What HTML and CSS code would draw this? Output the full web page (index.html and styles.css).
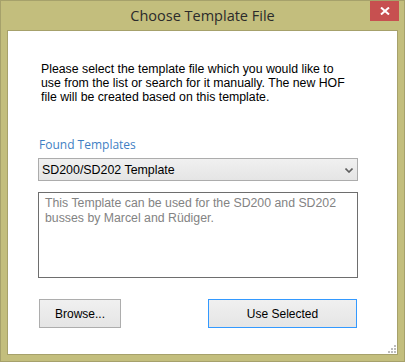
FILE: index.html
```html
<!DOCTYPE html>
<html lang="en">
<head>
    <meta charset="UTF-8">
    <meta name="viewport" content="width=device-width, initial-scale=1.0">
    <title>Choose Template File</title>

    <link rel="stylesheet" href="styles.css">

</head>
<body>

<div class="window">
  <div class="titlebar">
    <span class="title">Choose Template File</span>
    <div class="close-btn">
      <svg width="10" height="8" viewBox="0 0 10 8">
        <path d="M1 0.5 L9 7.5 M9 0.5 L1 7.5" stroke="#fff" stroke-width="2"/>
      </svg>
    </div>
  </div>

  <div class="client">
    <p class="intro">
      Please select the template file which you would like to<br>
      use from the list or search for it manually. The new HOF<br>
      file will be created based on this template.
    </p>

    <div class="field-label">Found Templates</div>

    <div class="combo">
      <span>SD200/SD202 Template</span>
      <svg class="chevron" width="8" height="5" viewBox="0 0 8 5">
        <path d="M0.5 0.5 L4 4 L7.5 0.5" stroke="#5f5f5f" stroke-width="1.6" fill="none"/>
      </svg>
    </div>

    <div class="description">
      This Template can be used for the SD200 and SD202<br>
      busses by Marcel and Rüdiger.
    </div>

    <div class="button-row">
      <button class="btn btn-browse">Browse...</button>
      <button class="btn btn-use">Use Selected</button>
    </div>

    <!-- size grip -->
    <svg class="grip" width="8" height="8" viewBox="0 0 8 8">
      <rect x="6" y="0" width="2" height="2" fill="#bcbcbc"/>
      <rect x="3" y="3" width="2" height="2" fill="#bcbcbc"/>
      <rect x="6" y="3" width="2" height="2" fill="#bcbcbc"/>
      <rect x="0" y="6" width="2" height="2" fill="#bcbcbc"/>
      <rect x="3" y="6" width="2" height="2" fill="#bcbcbc"/>
      <rect x="6" y="6" width="2" height="2" fill="#bcbcbc"/>
    </svg>
  </div>
</div>

</body>
</html>
```

FILE: styles.css
```css
* {
  box-sizing: border-box;
}

body {
  margin: 0;
  padding: 0;
  font-family: 'Liberation Sans', Arial, sans-serif;
}

.window {
  width: 405px;
  height: 362px;
  background-color: #c3be7d;
  border: 1px solid #a6a16b;
  padding: 0 6px 6px 6px;
  display: flex;
  flex-direction: column;
}

.titlebar {
  height: 29px;
  display: flex;
  justify-content: center;
  align-items: center;
  position: relative;
}

.title {
  font-family: 'Open Sans', 'Noto Sans', sans-serif;
  font-size: 14.5px;
  color: #2b2b2b;
  margin-top: -1px;
}

.close-btn {
  position: absolute;
  top: 0;
  right: -1px;
  width: 29px;
  height: 20px;
  background-color: #c75050;
  display: flex;
  justify-content: center;
  align-items: center;
}

.client {
  flex: 1;
  background-color: #ffffff;
  border: 1px solid #a6a16b;
  padding: 31px 0 0 30px;
  position: relative;
}

.intro {
  margin: 0 0 0 3px;
  font-size: 12.3px;
  line-height: 14px;
  color: #000;
  white-space: nowrap;
}

.field-label {
  margin-top: 33px;
  margin-left: 1px;
  font-family: 'Open Sans', 'Noto Sans', sans-serif;
  font-size: 12px;
  line-height: 16px;
  color: #3f7fc4;
}

.combo {
  margin-top: 5px;
  width: 320px;
  height: 23px;
  border: 1px solid #acacac;
  background: linear-gradient(#f0f0f0, #e5e5e5);
  display: flex;
  align-items: center;
  justify-content: space-between;
  padding: 0 4px 0 3px;
  font-size: 12.4px;
  color: #000;
}

.chevron {
  margin-top: 1px;
}

.description {
  margin-top: 11px;
  width: 320px;
  height: 86px;
  border: 1px solid #6e6e6e;
  padding: 3px 6px;
  font-size: 12.3px;
  line-height: 15px;
  color: #838383;
  white-space: nowrap;
}

.button-row {
  margin-top: 21px;
  width: 319px;
  display: flex;
  justify-content: space-between;
  padding-left: 1px;
}

.btn {
  height: 29px;
  font-family: 'Liberation Sans', Arial, sans-serif;
  font-size: 12px;
  color: #000;
  background: linear-gradient(#f0f0f0, #e5e5e5);
  border: 1px solid #adadad;
  padding: 0;
  margin: 0;
}

.btn-browse {
  width: 82px;
}

.btn-use {
  width: 149px;
  border-color: #3399ff;
}

.grip {
  position: absolute;
  right: 1px;
  bottom: 1px;
}
```
